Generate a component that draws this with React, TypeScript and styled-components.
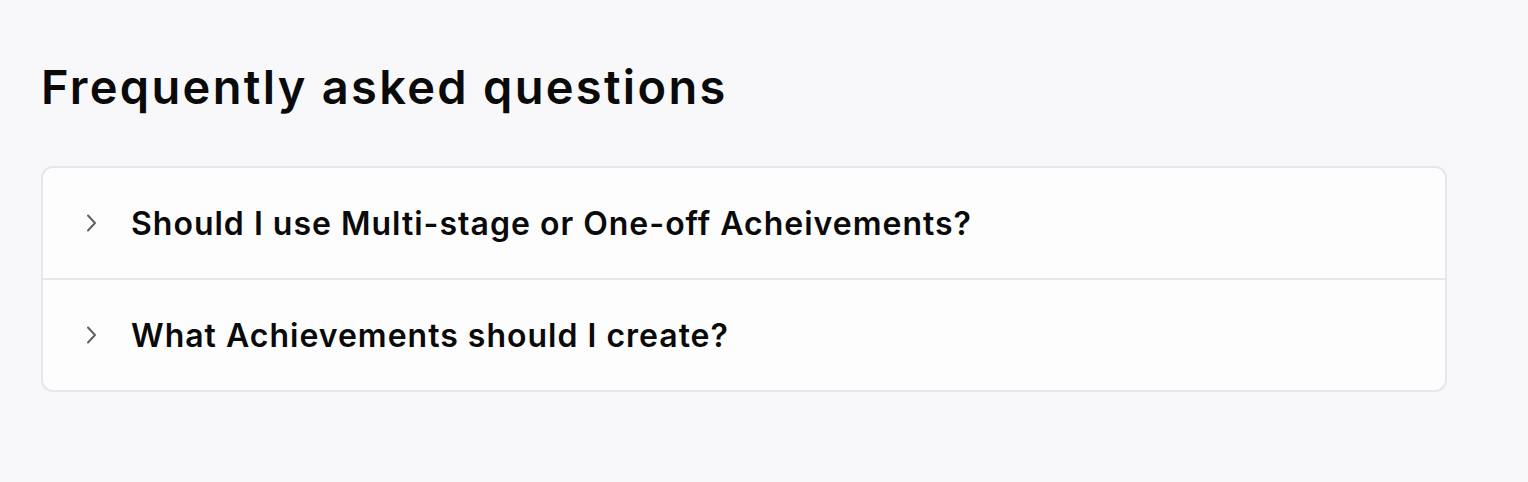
import React, { ReactElement } from "react";
import styled, { createGlobalStyle } from "styled-components";

const GlobalStyle = createGlobalStyle`
  html, body {
    margin: 0;
    padding: 0;
    background: #f8f8fa;
  }
  body {
    font-family: "Inter", "Noto Sans", sans-serif;
    color: #0a0a0a;
  }
`;

const Page = styled.div`
  padding: 55px 81px 0 41px;
`;

const Title = styled.h1`
  margin: 0;
  font-size: 47px;
  font-weight: 600;
  line-height: 64px;
  letter-spacing: 2.3px;
`;

const Accordion = styled.div`
  margin-top: 47px;
  width: 1406px;
  box-sizing: border-box;
  background: #fdfdfd;
  border: 2px solid #e6e6eb;
  border-radius: 12px;
  overflow: hidden;
`;

const Item = styled.div<{ $last?: boolean }>`
  display: flex;
  align-items: center;
  height: 110px;
  padding-left: 42px;
  border-bottom: ${(p) => (p.$last ? "none" : "2px solid #e6e6eb")};
  cursor: pointer;
`;

const Chevron = styled.span`
  display: flex;
  width: 14px;
  height: 20px;
  margin-right: 32px;
  color: #616169;
`;

const Question = styled.span`
  font-size: 32px;
  font-weight: 600;
  letter-spacing: 1px;
`;

const questions = [
  "Should I use Multi-stage or One-off Acheivements?",
  "What Achievements should I create?",
];

export default function App(): ReactElement {
  return (
    <>
      <GlobalStyle />
      <Page>
        <Title>Frequently asked questions</Title>
        <Accordion>
          {questions.map((q, i) => (
            <Item key={q} $last={i === questions.length - 1}>
              <Chevron>
                <svg viewBox="0 0 14 20" width="14" height="20" fill="none">
                  <path
                    d="M3 2.5 L10 10 L3 17.5"
                    stroke="currentColor"
                    strokeWidth="2"
                    strokeLinecap="round"
                    strokeLinejoin="round"
                  />
                </svg>
              </Chevron>
              <Question>{q}</Question>
            </Item>
          ))}
        </Accordion>
      </Page>
    </>
  );
}
